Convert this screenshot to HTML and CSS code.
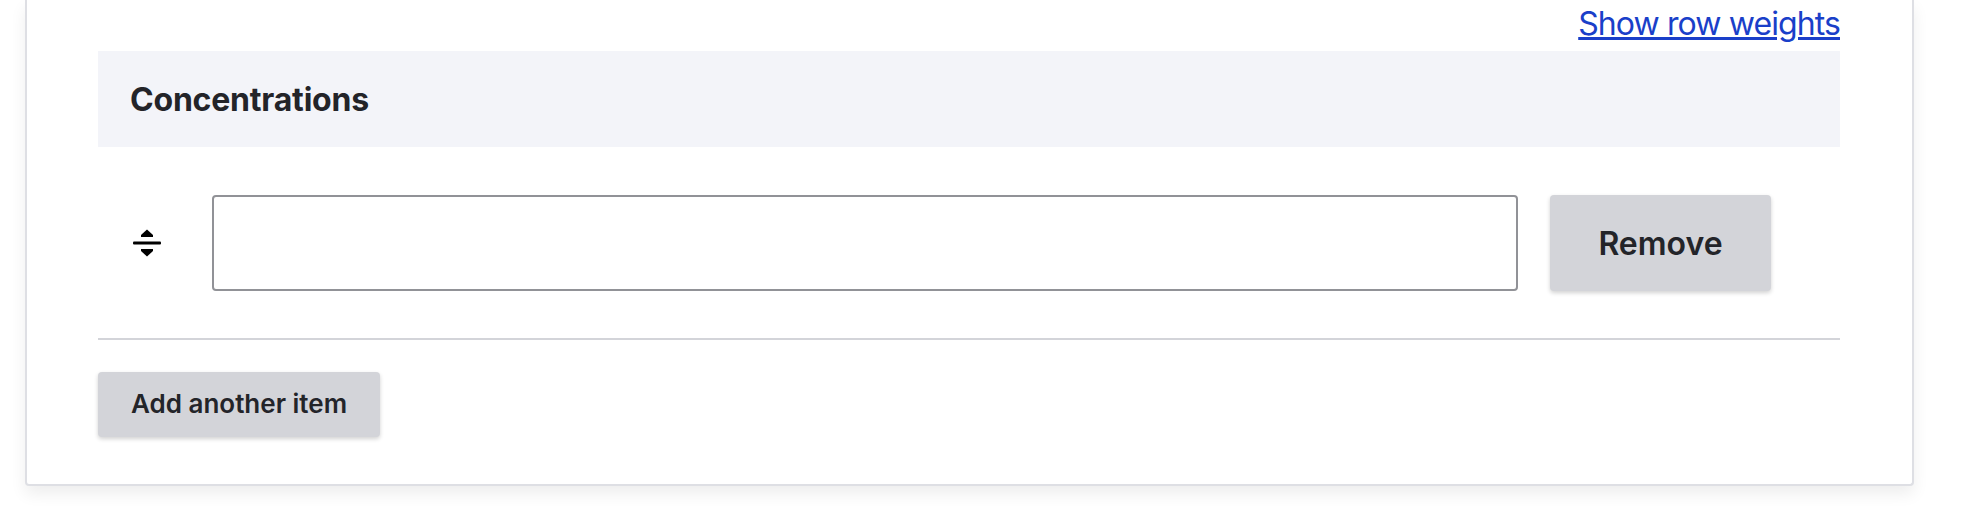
FILE: index.html
```html
<!doctype html>
<html lang="en">
  <head>
    <meta charset="UTF-8" />
    <title>Concentrations</title>
    <link rel="stylesheet" href="styles.css">
  </head>

  <body>
    <div class="card">
      <div class="weights">
        <a class="weights-link" href="#">Show row weights</a>
      </div>

      <div class="field-header">
        <h4 class="field-title">Concentrations</h4>
      </div>

      <div class="field-row">
        <span class="handle">
          <svg width="28" height="28" viewBox="0 0 28 28">
            <path d="M8 6 L14 0.5 L20 6 V8 H8 Z" />
            <rect x="0" y="12.5" width="28" height="3" rx="1" />
            <path d="M8 20 H20 V22 L14 27.5 L8 22 Z" />
          </svg>
        </span>
        <input class="field-input" type="text" />
        <button class="btn btn-remove">Remove</button>
      </div>

      <div class="field-actions">
        <button class="btn btn-add">Add another item</button>
      </div>
    </div>
  </body>
</html>
```

FILE: styles.css
```css
:root {
  --text-color: #232429;
  --link-color: #1a3fc9;
  --button-bg: #d3d4d9;
  --header-bg: #f3f4f9;
  --border-color: #dedfe4;
  --input-border: #919297;
}

* {
  margin: 0;
  padding: 0;
  box-sizing: border-box;
}

body {
  height: 100vh;
  overflow: hidden;
  background-color: #ffffff;
  color: var(--text-color);
  font-family: Inter, "Liberation Sans", sans-serif;
}

.card {
  width: 1889px;
  margin-left: 25px;
  padding: 0 72px 47px 71px;
  background-color: #ffffff;
  border: 2px solid var(--border-color);
  border-top: 0;
  border-radius: 0 0 4px 4px;
  box-shadow: 0 8px 16px rgba(0, 0, 0, 0.07);
}

.weights {
  height: 51px;
  text-align: right;
}

.weights-link {
  color: var(--link-color);
  font-size: 32px;
  letter-spacing: -0.9px;
  line-height: 47px;
}

.field-header {
  display: flex;
  align-items: center;
  height: 96px;
  padding-left: 32px;
  background-color: var(--header-bg);
}

.field-title {
  font-size: 32px;
  font-weight: 700;
  letter-spacing: -0.2px;
}

.field-row {
  display: flex;
  align-items: flex-start;
  gap: 32px;
  padding: 48px 0 47px 35px;
  border-bottom: 2px solid var(--button-bg);
}

.handle {
  display: flex;
  align-self: center;
  width: 28px;
  margin-right: 19px;
  flex-shrink: 0;
}

.field-input {
  width: 1306px;
  height: 96px;
  background-color: #ffffff;
  border: 2px solid var(--input-border);
  border-radius: 4px;
}

.btn {
  background-color: var(--button-bg);
  color: var(--text-color);
  font-family: inherit;
  font-weight: 600;
  border: 0;
  border-radius: 4px;
  box-shadow: 0 2px 4px rgba(0, 0, 0, 0.18);
}

.btn-remove {
  width: 221px;
  height: 96px;
  font-size: 32px;
}

.field-actions {
  margin-top: 32px;
}

.btn-add {
  width: 282px;
  height: 65px;
  padding-bottom: 2px;
  font-size: 26px;
}
```
